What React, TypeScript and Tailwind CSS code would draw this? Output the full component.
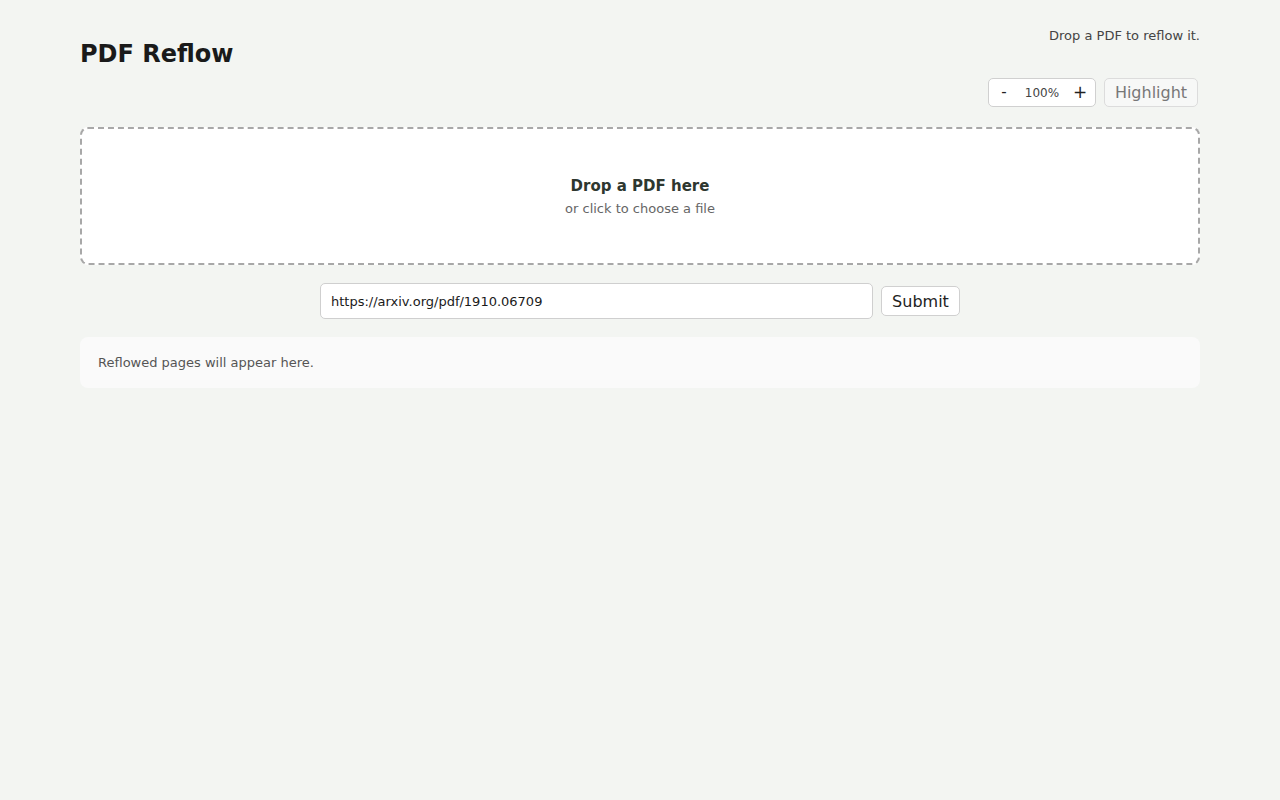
import React from "react";

export default function App() {
  return (
    <div
      className="min-h-[800px] w-full bg-[#f3f5f2] text-[#1a1a1a]"
      style={{ fontFamily: '"DejaVu Sans", sans-serif' }}
    >
      <div className="mx-auto w-[1120px] pt-[27px]">
        <div className="flex items-start justify-between">
          <h1 className="mt-[12px] text-[24px] font-bold leading-[30px] text-[#1a1a1a]">PDF Reflow</h1>
          <div className="flex flex-col items-end">
            <div className="text-[13px] leading-[18px] text-[#444]">Drop a PDF to reflow it.</div>
            <div className="mt-[33px] mr-[2px] flex items-center gap-[8px]">
              <div className="flex h-[29px] w-[108px] items-center rounded-[5px] border border-[#d0d0d0] bg-white">
                <button className="w-[30px] text-center text-[15px] leading-none text-[#222]">-</button>
                <span className="w-[46px] text-center text-[12px] text-[#444]">100%</span>
                <button className="w-[30px] text-center text-[17px] leading-none text-[#222]">+</button>
              </div>
              <button className="h-[29px] w-[94px] rounded-[5px] border border-[#dcdcdc] bg-[#f7f8f7] text-[16px] text-[#777]">
                Highlight
              </button>
            </div>
          </div>
        </div>

        <div className="mt-[20px] flex h-[138px] flex-col items-center justify-center rounded-[8px] border-2 border-dashed border-[#a8a8a8] bg-white pt-[2px]">
          <div className="text-[15px] font-bold leading-[19px] text-[#2e372f]">Drop a PDF here</div>
          <div className="mt-[4px] text-[13px] leading-[18px] text-[#666]">or click to choose a file</div>
        </div>

        <div className="mt-[18px] flex items-center justify-center gap-[8px]">
          <input
            className="h-[36px] w-[553px] rounded-[5px] border border-[#cfcfcf] bg-white px-[10px] text-[13px] text-[#1a1a1a] outline-none"
            style={{ fontFamily: '"DejaVu Sans", sans-serif' }}
            defaultValue="https://arxiv.org/pdf/1910.06709"
          />
          <button className="h-[30px] w-[79px] rounded-[5px] border border-[#d0d0d0] bg-white pt-[1px] text-[16px] text-[#222]">
            Submit
          </button>
        </div>

        <div className="mt-[18px] flex h-[51px] items-center rounded-[8px] bg-[#fafafa] px-[18px] text-[13px] text-[#555]">
          Reflowed pages will appear here.
        </div>
      </div>
    </div>
  );
}
